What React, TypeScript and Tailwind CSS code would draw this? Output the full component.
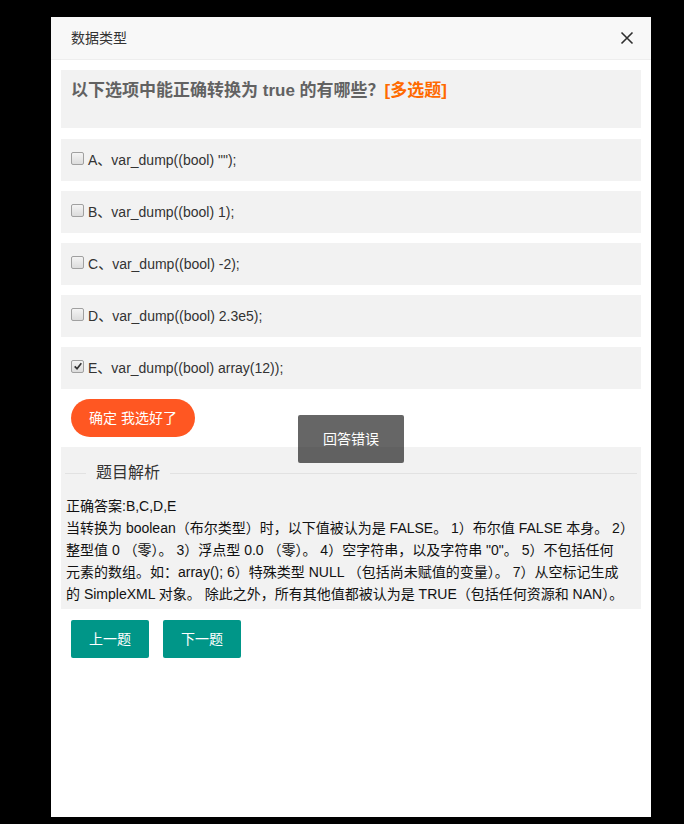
import React from 'react'

const options = [
    { key: 'A', text: 'var_dump((bool) "");', checked: false },
    { key: 'B', text: 'var_dump((bool) 1);', checked: false },
    { key: 'C', text: 'var_dump((bool) -2);', checked: false },
    { key: 'D', text: 'var_dump((bool) 2.3e5);', checked: false },
    { key: 'E', text: 'var_dump((bool) array(12));', checked: true },
]

// wrapped as in the original page
const analysis = [
    '当转换为 boolean（布尔类型）时，以下值被认为是 FALSE。 1）布尔值 FALSE 本身。 2）',
    '整型值 0 （零）。 3）浮点型 0.0 （零）。 4）空字符串，以及字符串 "0"。 5）不包括任何',
    '元素的数组。如：array(); 6）特殊类型 NULL （包括尚未赋值的变量）。 7）从空标记生成',
    '的 SimpleXML 对象。 除此之外，所有其他值都被认为是 TRUE（包括任何资源和 NAN）。',
]

function Checkbox({ checked }: { checked: boolean }) {
    return (
        <span className="-mt-[4px] mr-[4px] flex h-[13px] w-[13px] shrink-0 items-center justify-center rounded-[2px] border border-[#a0a0a0] bg-gradient-to-b from-[#f4f4f4] to-[#dcdcdc]">
            {checked && (
                <svg viewBox="0 0 12 12" className="h-[10px] w-[10px]">
                    <path d="M2 6.5 L4.8 9.2 L10 2.8" fill="none" stroke="#333" strokeWidth="2" />
                </svg>
            )}
        </span>
    )
}

export default function App() {
    return (
        <div
            className="min-h-screen bg-black pt-[17px] pl-[51px]"
            style={{ fontFamily: '"Liberation Sans", Arial, "Noto Sans CJK SC", sans-serif' }}
        >
            <div className="relative flex h-[800px] w-[600px] flex-col bg-white">
                {/* Header */}
                <div className="flex h-[43px] shrink-0 items-center justify-between border-b border-[#eeeeee] bg-[#f8f8f8] pl-[20px] pr-[17px]">
                    <span className="text-[14px] text-[#333]">数据类型</span>
                    <svg viewBox="0 0 14 14" className="h-[14px] w-[14px]">
                        <path d="M1.5 1.5 L12.5 12.5 M12.5 1.5 L1.5 12.5" stroke="#2f2f2f" strokeWidth="1.6" />
                    </svg>
                </div>

                {/* Body */}
                <div className="flex flex-col p-[10px]">
                    <div className="h-[58px] bg-[#f2f2f2] px-[10px] pt-[9px]">
                        <h3 className="text-[17px] font-bold leading-[24px] text-[#626262]">
                            以下选项中能正确转换为 true 的有哪些？<span className="text-[#ff6a00]">[多选题]</span>
                        </h3>
                    </div>

                    <div className="mt-[11px] flex flex-col gap-[10px]">
                        {options.map((o) => (
                            <label key={o.key} className="flex h-[42px] items-center bg-[#f2f2f2] pl-[10px] text-[14px] text-[#333]">
                                <Checkbox checked={o.checked} />
                                <span>
                                    {o.key}、{o.text}
                                </span>
                            </label>
                        ))}
                    </div>

                    <div className="mt-[10px] pl-[10px]">
                        <button className="h-[38px] rounded-full bg-[#ff5722] px-[18px] text-[14px] text-white">确定 我选好了</button>
                    </div>

                    {/* Analysis */}
                    <div className="mt-[10px] bg-[#f2f2f2] pb-[4px] pt-[14px]">
                        <div className="mx-[4px] flex items-center">
                            <span className="h-px w-[21px] bg-[#e2e2e2]" />
                            <span className="px-[10px] text-[16px] leading-[24px] text-[#333]">题目解析</span>
                            <span className="h-px flex-1 bg-[#e2e2e2]" />
                        </div>
                        <div className="mt-[10px] whitespace-nowrap pl-[5px] text-[14px] leading-[22px] text-[#111]">
                            <p>正确答案:B,C,D,E</p>
                            <p>
                                {analysis.map((line, i) => (
                                    <React.Fragment key={i}>
                                        {line}
                                        {i < analysis.length - 1 && <br />}
                                    </React.Fragment>
                                ))}
                            </p>
                        </div>
                    </div>

                    <div className="mt-[11px] flex gap-[14px] pl-[10px]">
                        <button className="h-[38px] w-[78px] rounded-[2px] bg-[#009688] text-[14px] text-white">上一题</button>
                        <button className="h-[38px] w-[78px] rounded-[2px] bg-[#009688] text-[14px] text-white">下一题</button>
                    </div>
                </div>

                {/* Toast */}
                <div className="absolute left-1/2 top-[398px] -translate-x-1/2 rounded-[2px] bg-black/60 px-[25px] py-[12px] text-[14px] leading-[24px] text-white">
                    回答错误
                </div>
            </div>
        </div>
    )
}
